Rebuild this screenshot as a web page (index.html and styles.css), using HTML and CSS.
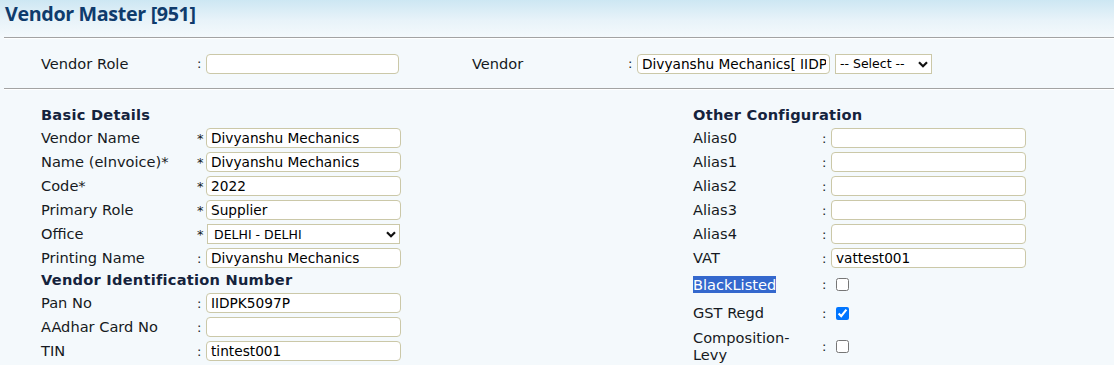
FILE: index.html
```
<!DOCTYPE html>
<html lang="en">
<head>
  <meta charset="UTF-8">
  <title>Vendor Master</title>
  <link rel="stylesheet" href="styles.css">
</head>
<body>
  <div class="header">
    <h1>Vendor Master [951]</h1>
  </div>
  <div class="rule"></div>

  <div class="top-row">
    <div class="field">
      <span class="label wide">Vendor Role</span>
      <span class="mark">:</span>
      <input type="text" class="txt short" value="">
    </div>
    <div class="field vendor">
      <span class="label wide">Vendor</span>
      <span class="mark">:</span>
      <input type="text" class="txt short" value="Divyanshu Mechanics[ IIDPK5097P ]">
      <div class="select-wrap small">
        <select class="sel"><option>-- Select --</option></select>
        <svg class="chev" width="10" height="7" viewBox="0 0 10 7"><path d="M1 1.2 L5 5.2 L9 1.2" fill="none" stroke="#111" stroke-width="2.2"/></svg>
      </div>
    </div>
  </div>
  <div class="rule"></div>

  <div class="main">
    <div class="col left">
      <div class="section-title">Basic Details</div>
      <div class="row"><span class="label">Vendor Name</span><span class="mark">*</span><input type="text" class="txt" value="Divyanshu Mechanics"></div>
      <div class="row"><span class="label">Name (eInvoice)*</span><span class="mark">*</span><input type="text" class="txt" value="Divyanshu Mechanics"></div>
      <div class="row"><span class="label">Code*</span><span class="mark">*</span><input type="text" class="txt" value="2022"></div>
      <div class="row"><span class="label">Primary Role</span><span class="mark">*</span><input type="text" class="txt" value="Supplier"></div>
      <div class="row">
        <span class="label">Office</span><span class="mark">*</span>
        <div class="select-wrap office">
          <select class="sel"><option>DELHI - DELHI</option></select>
          <svg class="chev" width="10" height="7" viewBox="0 0 10 7"><path d="M1 1.2 L5 5.2 L9 1.2" fill="none" stroke="#111" stroke-width="2.2"/></svg>
        </div>
      </div>
      <div class="row"><span class="label">Printing Name</span><span class="mark">:</span><input type="text" class="txt" value="Divyanshu Mechanics"></div>
      <div class="section-title">Vendor Identification Number</div>
      <div class="row"><span class="label">Pan No</span><span class="mark">:</span><input type="text" class="txt" value="IIDPK5097P"></div>
      <div class="row"><span class="label">AAdhar Card No</span><span class="mark">:</span><input type="text" class="txt" value=""></div>
      <div class="row"><span class="label">TIN</span><span class="mark">:</span><input type="text" class="txt" value="tintest001"></div>
    </div>

    <div class="col right">
      <div class="section-title">Other Configuration</div>
      <div class="row"><span class="label">Alias0</span><span class="mark">:</span><input type="text" class="txt" value=""></div>
      <div class="row"><span class="label">Alias1</span><span class="mark">:</span><input type="text" class="txt" value=""></div>
      <div class="row"><span class="label">Alias2</span><span class="mark">:</span><input type="text" class="txt" value=""></div>
      <div class="row"><span class="label">Alias3</span><span class="mark">:</span><input type="text" class="txt" value=""></div>
      <div class="row"><span class="label">Alias4</span><span class="mark">:</span><input type="text" class="txt" value=""></div>
      <div class="row"><span class="label">VAT</span><span class="mark">:</span><input type="text" class="txt" value="vattest001"></div>
      <div class="row check-row black"><span class="label"><span class="picked">BlackListed</span></span><span class="mark">:</span><input type="checkbox" class="chk"></div>
      <div class="row check-row gst"><span class="label">GST Regd</span><span class="mark">:</span><input type="checkbox" class="chk" checked></div>
      <div class="row check-row comp"><span class="label narrow">Composition-Levy</span><span class="mark">:</span><input type="checkbox" class="chk"></div>
    </div>
  </div>
</body>
</html>
```
FILE: styles.css
```
body {
  margin: 0;
  background: #f4f9fc;
  font-family: "DejaVu Sans", Verdana, sans-serif;
  font-size: 14.6px;
  color: #161a22;
}
.header {
  height: 37px;
  background: linear-gradient(to bottom, #cde7f3 0%, #e8f3f9 55%, #f4f9fc 100%);
}
.header h1 {
  margin: 0;
  padding: 0 0 0 5px;
  font-family: "Open Sans", "Noto Sans", sans-serif;
  font-size: 19.7px;
  font-weight: bold;
  color: #0f3b6c;
  letter-spacing: -0.35px;
  line-height: 28px;
}
.rule {
  margin-left: 4px;
  border-top: 1px solid #a3a3a3;
  border-bottom: 1px solid #ffffff;
}
.top-row {
  display: flex;
  height: 49px;
  align-items: center;
  padding-left: 41px;
}
.field {
  display: flex;
  align-items: center;
}
.field.vendor {
  margin-left: 73px;
}
.label {
  width: 129px;
  flex: none;
  line-height: 17px;
  margin-top: -1px;
}
.left .label,
.label.wide {
  width: 156px;
}
.label.narrow {
  box-sizing: border-box;
  padding-right: 22px;
}
.mark {
  width: 9px;
  flex: none;
  font-size: 13px;
}
.txt {
  box-sizing: border-box;
  width: 195px;
  height: 20px;
  margin: 0;
  padding: 0 3px 0 4px;
  border: 1px solid #cbc8a8;
  border-radius: 4px;
  background: #fff;
  font-family: "DejaVu Sans", Verdana, sans-serif;
  font-size: 13.7px;
  color: #000;
}
.txt.short {
  width: 193px;
}
.select-wrap {
  position: relative;
  display: inline-block;
}
.select-wrap.small {
  margin-left: 5px;
}
.sel {
  -webkit-appearance: none;
  appearance: none;
  box-sizing: border-box;
  height: 20px;
  margin: 0;
  padding: 0 16px 0 4px;
  border: 1px solid #cbc8a8;
  border-radius: 0;
  background: #fff;
  font-family: "DejaVu Sans", Verdana, sans-serif;
  font-size: 12.5px;
  color: #000;
}
.small .sel {
  width: 97px;
  padding-left: 4px;
}
.office .sel {
  width: 193px;
  margin-left: 1px;
  padding-left: 6px;
}
.chev {
  position: absolute;
  right: 4px;
  top: 7px;
  pointer-events: none;
}
.main {
  display: flex;
  padding-top: 15px;
}
.col.left {
  width: 652px;
  flex: none;
  padding-left: 41px;
}
.col.right {
  width: 400px;
}
.section-title {
  font-weight: bold;
  color: #15233d;
  height: 21px;
  line-height: 19px;
  letter-spacing: 0.25px;
}
.row {
  display: flex;
  align-items: center;
  height: 24px;
}
.check-row.black {
  height: 27px;
  padding-top: 1px;
}
.check-row.gst {
  height: 30px;
}
.check-row.comp {
  height: 37px;
}
.chk {
  width: 13px;
  height: 13px;
  margin: 0 0 0 5px;
  accent-color: #0075ff;
}
.picked {
  background: #3468cd;
  color: #fff;
}
```
